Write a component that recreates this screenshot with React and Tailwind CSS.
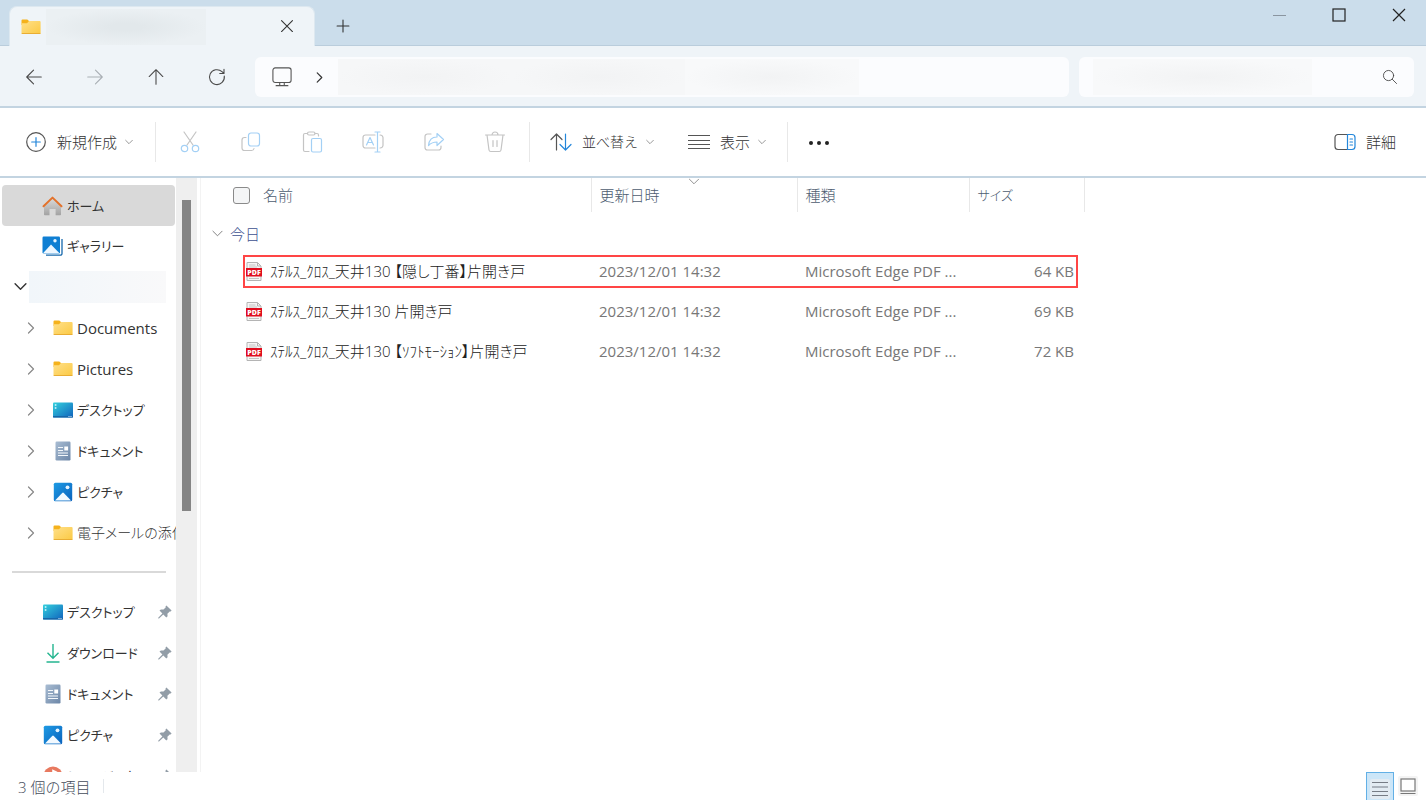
import React from "react";

/* ---------- icons ---------- */

function Folder({ className }) {
  return (
    <svg className={className} viewBox="0 0 20 16" fill="none" aria-hidden="true">
      <defs>
        <linearGradient id="folderFront" x1="0" y1="0" x2="1" y2="1">
          <stop offset="0" stopColor="#ffe08a" />
          <stop offset="1" stopColor="#fbc943" />
        </linearGradient>
      </defs>
      <path d="M0.5 1.500a1 1 0 0 1 1-1h4.800l1.700 1.600h0.500V6h-8z" fill="#f5b21c" />
      <path d="M0.5 4.200H6l2-2.200h10.600a1 1 0 0 1 1 1V14a1 1 0 0 1-1 1H1.500a1 1 0 0 1-1-1z" fill="url(#folderFront)" />
      <path d="M0.5 14a1 1 0 0 0 1 1h17.100a1 1 0 0 0 1-1z" fill="#e9ad33" />
    </svg>
  );
}

function HomeIcon({ className }) {
  return (
    <svg className={className} viewBox="0 0 20 20" fill="none" aria-hidden="true">
      <defs>
        <linearGradient id="homeWall" x1="0" y1="0" x2="0" y2="1">
          <stop offset="0" stopColor="#dcdcdc" />
          <stop offset="1" stopColor="#a2a2a2" />
        </linearGradient>
      </defs>
      <path d="M1.500 9.500L10 1.800l8.500 7.700V18.500a0.800 0.800 0 0 1-.8.8h-4.600v-6.300H7v6.300H2.300a0.800 0.800 0 0 1-.8-.8z" fill="url(#homeWall)" />
      <path d="M1 10.300L10 1.600l9 8.700" stroke="#e3722b" strokeWidth="2" strokeLinecap="round" strokeLinejoin="round" />
    </svg>
  );
}

function GalleryIcon({ className }) {
  return (
    <svg className={className} viewBox="0 0 21 20" fill="none" aria-hidden="true">
      <path d="M20 3v14.500a1.700 1.700 0 0 1-1.700 1.700H4" stroke="#1668ac" strokeWidth="1.300" />
      <rect x="0.500" y="0.500" width="17.500" height="17" rx="1.200" fill="#0f7fd3" />
      <path d="M1 17.300L9 8.500l8.500 8.800z" fill="#eef7ff" />
      <circle cx="13" cy="4.800" r="1.700" fill="#e7f4ff" />
    </svg>
  );
}

function PictureIcon({ className }) {
  return (
    <svg className={className} viewBox="0 0 20 20" fill="none" aria-hidden="true">
      <defs>
        <linearGradient id="pictureSky" x1="0" y1="0" x2="1" y2="1">
          <stop offset="0" stopColor="#1e9be4" />
          <stop offset="1" stopColor="#0a62bd" />
        </linearGradient>
      </defs>
      <rect x="0.800" y="0.800" width="18.400" height="18.400" rx="1.500" fill="url(#pictureSky)" />
      <path d="M2 18.600l7.200-7.700a1.100 1.100 0 0 1 1.600 0l7.200 7.700z" fill="#f2f9ff" />
      <circle cx="14.500" cy="5.300" r="1.900" fill="#e3f3ff" />
    </svg>
  );
}

function DesktopIcon({ className }) {
  return (
    <svg className={className} viewBox="0 0 20 16" fill="none" aria-hidden="true">
      <defs>
        <linearGradient id="desktopFill" x1="0" y1="0" x2="1" y2="1">
          <stop offset="0" stopColor="#34d0dd" />
          <stop offset="1" stopColor="#1063bd" />
        </linearGradient>
      </defs>
      <rect x="0" y="0.500" width="20" height="15" rx="1" fill="url(#desktopFill)" />
      <rect x="0" y="14" width="20" height="1.500" fill="#1766a8" />
      <path d="M1.800 2.200h1.600v1.600H1.800zM1.800 5.200h1.600v1.600H1.800z" fill="#d8fbff" />
      <path d="M15.500 14.500h1M17.500 14.500h1" stroke="#d8ecff" />
    </svg>
  );
}

function DocumentIcon({ className }) {
  return (
    <svg className={className} viewBox="0 0 16 20" fill="none" aria-hidden="true">
      <defs>
        <linearGradient id="documentFill" x1="0" y1="0" x2="1" y2="1">
          <stop offset="0" stopColor="#a9bdd3" />
          <stop offset="1" stopColor="#6c86a7" />
        </linearGradient>
      </defs>
      <rect x="0.500" y="0.500" width="15" height="19" rx="1.200" fill="url(#documentFill)" />
      <path d="M3 6.500h5M3 9.500h5M3 12h10M3 14.500h10" stroke="#f3f7fb" strokeWidth="1.200" />
      <rect x="9.300" y="5.500" width="3.800" height="4" fill="#ffffff" />
    </svg>
  );
}

function DownloadIcon({ className }) {
  return (
    <svg className={className} viewBox="0 0 20 20" fill="none" aria-hidden="true">
      <path d="M10 1v14M4.500 9.800L10 15.300l5.500-5.500" stroke="#23b58f" strokeWidth="1.400" />
      <path d="M3.500 19h13" stroke="#23b58f" strokeWidth="1.500" />
    </svg>
  );
}

function MusicIcon({ className }) {
  return (
    <svg className={className} viewBox="0 0 20 20" fill="none" aria-hidden="true">
      <circle cx="10" cy="10" r="9.500" fill="#e8795f" />
      <path d="M10 14V4.500l4 2" stroke="#ffffff" strokeWidth="1.600" />
      <circle cx="8.500" cy="14" r="2" fill="#ffffff" />
    </svg>
  );
}

function PinIcon() {
  return (
    <svg className="size-[14px] shrink-0" viewBox="0 0 14 14" aria-hidden="true">
      <path d="M8.400 0.400l5.200 5.200-1 1-.9-.2-2.300 2.300.2 2.600-1.300 1.300-3-3L1 13.600l-.7-.2-.1-.6 4.200-4.200-2.900-3 1.400-1.200 2.600.2 2.300-2.300-.3-.9z" fill="#929da7" />
    </svg>
  );
}

function PdfIcon() {
  return (
    <svg className="h-[19px] w-4 shrink-0" viewBox="0 0 16 19" fill="none" aria-hidden="true">
      <path d="M1 0.500h10.500l3.500 3.500v14.500H1z" fill="#f6f6f6" stroke="#b4b4b4" />
      <path d="M11.500 0.500V4H15" stroke="#b4b4b4" />
      <path d="M3 3h6.500M3 5h8M3 16.500h10" stroke="#c4c4c4" />
      <rect x="0" y="6" width="16" height="8.500" fill="#e00d1e" />
      <text x="8" y="13" textAnchor="middle" fontSize="7" fontWeight="800" fontFamily="Open Sans, sans-serif" fill="#ffffff">PDF</text>
    </svg>
  );
}

function Chevron({ className, d }) {
  return (
    <svg className={className} viewBox="0 0 12 12" fill="none" stroke="currentColor" aria-hidden="true">
      <path d={d} strokeLinecap="round" strokeLinejoin="round" />
    </svg>
  );
}
const DOWN = "M1 3.500L6 8.500l5-5";
const RIGHT = "M3.500 1L8.500 6l-5 5";

function Line({ children, className = "size-[22px]" }) {
  return (
    <svg className={className} viewBox="0 0 22 22" fill="none" stroke="currentColor" strokeWidth="1.200" strokeLinecap="round" strokeLinejoin="round" aria-hidden="true">
      {children}
    </svg>
  );
}

/* ---------- window frame ---------- */

function TitleBar() {
  return (
    <header className="flex h-[46px] shrink-0 border-b border-[#bacddc] bg-[#cbddeb]">
      <div className="mt-[6px] -mb-px ml-[9px] flex h-10 w-[306px] items-center rounded-t-lg border border-b-0 border-[#dde8f0] bg-[#eff4f8] pl-[11px] pr-[17px]">
        <Folder className="h-4 w-5" />
        <div className="ml-[5px] h-9 w-[160px] bg-[radial-gradient(closest-side,#e2e8eb_20%,#ebf0f3)]" />
        <button aria-label="タブを閉じる" className="ml-auto flex size-5 items-center justify-center text-[#333]">
          <Line className="size-5"><path d="M5 4l12 12M17 4L5 16" /></Line>
        </button>
      </div>
      <button aria-label="新しいタブ" className="ml-[18px] mt-[6px] flex h-10 w-5 items-center justify-center text-[#333]">
        <Line className="size-5"><path d="M11 4.500v13M4.500 11h13" /></Line>
      </button>
      <div className="ml-auto flex gap-[6px]">
        <button aria-label="最小化" className="flex h-[30px] w-[54px] items-center justify-center">
          <svg className="size-[14px]" viewBox="0 0 14 14" stroke="#8a95a0"><path d="M1 7.500h13" /></svg>
        </button>
        <button aria-label="最大化" className="flex h-[30px] w-[54px] items-center justify-center">
          <svg className="size-[14px]" viewBox="0 0 14 14" fill="none" stroke="#222" strokeWidth="1.200"><rect x="1" y="1" width="12" height="12" /></svg>
        </button>
        <button aria-label="閉じる" className="flex h-[30px] w-[54px] items-center justify-center">
          <svg className="size-[14px]" viewBox="0 0 14 14" stroke="#222" strokeWidth="1.200"><path d="M1 1l12 12M13 1L1 13" /></svg>
        </button>
      </div>
    </header>
  );
}

function NavButton({ label, muted, children }) {
  return (
    <button aria-label={label} className={muted ? "flex size-10 items-center justify-center text-[#a9afb4]" : "flex size-10 items-center justify-center text-[#4a4a4a]"}>
      <Line className="size-5">{children}</Line>
    </button>
  );
}

function NavBar() {
  return (
    <div className="flex h-[62px] shrink-0 items-center border-b-2 border-[#c3d4e1] bg-[#eff4f8] pl-[14px] pr-3 pt-[2px]">
      <div className="mr-[18px] flex gap-[21px]">
        <NavButton label="戻る"><path d="M3 11h16M10.500 3.500L3 11l7.500 7.500" /></NavButton>
        <NavButton label="進む" muted><path d="M3 11h16M11.500 3.500L19 11l-7.500 7.500" /></NavButton>
        <NavButton label="上へ"><path d="M11 3v16M3.500 10.500L11 3l7.500 7.500" /></NavButton>
        <NavButton label="更新"><path d="M19 10A8.200 8.200 0 1 1 16.500 5.200L18.500 7M18.700 2.500V7.200H14" /></NavButton>
      </div>
      <nav aria-label="アドレス バー" className="mr-[10px] flex h-10 flex-1 items-center rounded-md bg-[#fbfcfe] pl-[17px]">
        <Line className="size-5 text-[#555]">
          <rect x="1" y="1" width="20" height="16" rx="2.500" />
          <path d="M8.500 17v3M13.500 17v3M4.500 20.500h13" />
        </Line>
        <Chevron className="ml-[22px] size-[11px] text-[#333] stroke-[1.300]" d={RIGHT} />
        <div className="ml-[13px] flex h-9 w-[521px] bg-[#f6f7f8]">
          <div className="flex-1 bg-[radial-gradient(closest-side,#f2f3f4,#f6f7f8)]" />
          <div className="flex-1 bg-[radial-gradient(closest-side,#f2f3f4,#f6f7f8)]" />
          <div className="flex-1 bg-[radial-gradient(closest-side,#f2f3f4,#f8f9fa)]" />
        </div>
      </nav>
      <label className="flex h-10 w-[335px] items-center rounded-md bg-[#fbfcfe] pl-[14px] pr-4">
        <input type="search" aria-label="検索" className="h-9 w-[219px] bg-[radial-gradient(closest-side,#f2f3f4,#f8f9fa)] outline-none" />
        <Line className="ml-auto size-4 text-[#444]">
          <circle cx="9" cy="9" r="7" />
          <path d="M14.200 14.200L20 20" />
        </Line>
      </label>
    </div>
  );
}

/* ---------- command bar ---------- */

function Separator() {
  return <div className="h-10 w-px bg-[#e8e8e8]" />;
}

function GhostButton({ label, children }) {
  return (
    <button disabled aria-label={label} className="flex h-10 w-[22px] items-center justify-center text-[#c4c4c4]">
      <Line>{children}</Line>
    </button>
  );
}

function MenuButton({ icon, children }) {
  return (
    <button className="flex h-10 items-center gap-[10px] text-[#333]">
      {icon}
      <span className="flex items-center gap-2">
        {children}
        <Chevron className="size-2 stroke-[1.300] text-[#888]" d={DOWN} />
      </span>
    </button>
  );
}

const PALE = "#a3d0f5";

function CommandBar() {
  return (
    <div className="flex h-[70px] shrink-0 items-center border-b-2 border-[#c3d4e1] bg-white pl-[25px] pr-[30px] font-light text-[#333]">
      <div className="w-[130px]">
        <MenuButton
          icon={
            <Line>
              <circle cx="11" cy="11" r="9.300" stroke="#555" />
              <path d="M11 6.700v8.600M6.700 11h8.600" stroke="#2386da" />
            </Line>
          }
        >
          新規作成
        </MenuButton>
      </div>
      <Separator />
      <div className="ml-[23px] mr-[23px] flex gap-[39px]">
        <GhostButton label="切り取り">
          <path d="M5 1l9 13M17 1L8 14" />
          <g stroke={PALE}><circle cx="5.500" cy="17.500" r="3.200" /><circle cx="16.500" cy="17.500" r="3.200" /></g>
        </GhostButton>
        <GhostButton label="コピー">
          <path d="M6 6.500H4.500A2.500 2.500 0 0 0 2 9v8a2.500 2.500 0 0 0 2.500 2.500h7A2.500 2.500 0 0 0 14 17.500" />
          <rect x="8.500" y="2" width="11" height="13" rx="2.500" stroke={PALE} />
        </GhostButton>
        <GhostButton label="貼り付け">
          <path d="M8 20.500H4A1.500 1.500 0 0 1 2.500 19V4A1.500 1.500 0 0 1 4 2.500h2.500M14 2.500h2A1.500 1.500 0 0 1 17.500 4v1" />
          <rect x="6.500" y="1" width="7.500" height="3" rx="1.500" />
          <rect x="10.500" y="7.500" width="10" height="13.500" rx="1.500" stroke={PALE} />
        </GhostButton>
        <GhostButton label="名前の変更">
          <path d="M13 4H3.500A2.500 2.500 0 0 0 1 6.500v8A2.500 2.500 0 0 0 3.500 17H13M18 4a3 3 0 0 1 3 2.500v8A3 3 0 0 1 18 17" />
          <path d="M4.500 14L8 6.500l3.500 7.500M5.700 11.500h4.600M13 1h5M15.500 1v20M13 21h5" stroke={PALE} />
        </GhostButton>
        <GhostButton label="共有">
          <path d="M8 3H4.500A2.500 2.500 0 0 0 2 5.500v11A2.500 2.500 0 0 0 4.500 19h11a2.500 2.500 0 0 0 2.500-2.500V15" />
          <path d="M14 2.500l6.500 6-6.500 6v-3.500c-4 0-6 1-8.500 3.500C6 9 9 6 14 6z" stroke={PALE} />
        </GhostButton>
        <GhostButton label="削除">
          <path d="M1.500 4h19M3 4l2 15a1.800 1.800 0 0 0 1.800 1.500h8.400A1.800 1.800 0 0 0 17 19l2-15M8 4a3 3 0 0 1 6 0M9 9.500v6M13 9.500v6" />
        </GhostButton>
      </div>
      <Separator />
      <div className="ml-5 w-[118px] text-sm">
        <MenuButton
          icon={
            <Line>
              <path d="M6.500 19V3M1 8.500L6.500 3 12 8.500" stroke="#555" />
              <path d="M15.500 3v16M10 13.500l5.500 5.500 5.500-5.500" stroke="#2386da" />
            </Line>
          }
        >
          並べ替え
        </MenuButton>
      </div>
      <div className="ml-5 w-[99px]">
        <MenuButton
          icon={<Line><path d="M0.500 4.500h21M0.500 9.500h21M0.500 13.500h21M0.500 17.500h21" stroke="#555" /></Line>}
        >
          表示
        </MenuButton>
      </div>
      <Separator />
      <button aria-label="その他" className="ml-5 flex h-10 items-center text-[#222]">
        <svg className="size-[22px]" viewBox="0 0 22 22" fill="currentColor"><circle cx="3" cy="12" r="2" /><circle cx="11" cy="12" r="2" /><circle cx="19" cy="12" r="2" /></svg>
      </button>
      <button className="ml-auto flex h-10 items-center gap-[10px] text-[#333]">
        <Line>
          <path d="M13 3.500H4A3 3 0 0 0 1 6.500v9a3 3 0 0 0 3 3h9" stroke="#555" />
          <path d="M13.500 3.500H18a3 3 0 0 1 3 3v9a3 3 0 0 1-3 3h-4.500zM16 8h2.500M16 11h2.500M16 14h2.500" stroke="#2386da" />
        </Line>
        詳細
      </button>
    </div>
  );
}

/* ---------- sidebar ---------- */

const TREE = [
  { name: "Documents", Icon: Folder, size: "h-4 w-5", text: "text-[15px]" },
  { name: "Pictures", Icon: Folder, size: "h-4 w-5", text: "text-[15px]" },
  { name: "デスクトップ", Icon: DesktopIcon, size: "h-4 w-5", text: "text-[13px]" },
  { name: "ドキュメント", Icon: DocumentIcon, size: "h-5 w-4", text: "text-[13px]" },
  { name: "ピクチャ", Icon: PictureIcon, size: "size-5", text: "text-[13px]" },
  { name: "電子メールの添付", Icon: Folder, size: "h-4 w-5", text: "text-sm font-light" },
];

const PINNED = [
  { name: "デスクトップ", Icon: DesktopIcon, size: "h-4 w-5" },
  { name: "ダウンロード", Icon: DownloadIcon, size: "size-5" },
  { name: "ドキュメント", Icon: DocumentIcon, size: "h-5 w-4" },
  { name: "ピクチャ", Icon: PictureIcon, size: "size-5" },
  { name: "ミュージック", Icon: MusicIcon, size: "size-5" },
];

function Sidebar() {
  return (
    <div className="flex w-[201px] shrink-0 border-r border-[#f3f3f3]">
      <nav aria-label="ナビゲーション ウィンドウ" className="w-[176px] overflow-hidden whitespace-nowrap pt-[7px] text-[13px] text-[#333] [font-feature-settings:'palt']">
        <a href="#home" className="ml-[2px] mr-px flex h-[41px] items-center gap-1 rounded-sm bg-[#d9d9d9] pl-10">
          <HomeIcon className="h-5 w-[21px] shrink-0" />ホーム
        </a>
        <a href="#gallery" className="flex h-10 items-center gap-1 pl-[42px]">
          <GalleryIcon className="h-5 w-[21px] shrink-0" />ギャラリー
        </a>
        <div className="flex h-[41px] items-center pl-[14px]">
          <Chevron className="size-[13px] stroke-[1.300] text-[#333]" d={DOWN} />
          <div className="ml-[2px] h-8 w-[137px] bg-linear-to-r from-[#f1f6fa] to-[#f9f9fa]" />
        </div>
        <ul>
          {TREE.map(({ name, Icon, size, text }) => (
            <li key={name} className="flex h-[41px] items-center pl-[25px]">
              <Chevron className="size-3 shrink-0 stroke-[1.200] text-[#888]" d={RIGHT} />
              <a href="#folder" className="ml-[15px] flex items-center gap-1">
                <span className="flex w-[21px] shrink-0 justify-center"><Icon className={size} /></span>
                <span className={text}>{name}</span>
              </a>
            </li>
          ))}
        </ul>
        <hr className="mb-[18px] ml-3 mr-[10px] mt-[18px] border-t-2 border-[#d9d9d9]" />
        <ul>
          {PINNED.map(({ name, Icon, size }) => (
            <li key={name} className="flex h-[41px] items-center justify-between pl-[42px] pr-1">
              <a href="#pinned" className="flex items-center gap-1">
                <span className="flex w-[21px] shrink-0 justify-center"><Icon className={size} /></span>
                {name}
              </a>
              <PinIcon />
            </li>
          ))}
        </ul>
      </nav>
      <div className="w-[21px] bg-[#efefef] pl-[6px] pt-[22px]">
        <div className="h-[311px] w-[9px] bg-[#858585]" />
      </div>
    </div>
  );
}

/* ---------- file list ---------- */

const FILES = [
  { name: "ｽﾃﾙｽ_ｸﾛｽ_天井130 【隠し丁番】片開き戸", size: "64 KB", marked: true },
  { name: "ｽﾃﾙｽ_ｸﾛｽ_天井130 片開き戸", size: "69 KB" },
  { name: "ｽﾃﾙｽ_ｸﾛｽ_天井130 【ｿﾌﾄﾓｰｼｮﾝ】片開き戸", size: "72 KB" },
];

function FileList() {
  return (
    <main className="min-w-0 flex-1 overflow-hidden">
      <table className="w-[883px] table-fixed border-collapse text-left">
        <colgroup>
          <col className="w-[390px]" />
          <col className="w-[206px]" />
          <col className="w-[172px]" />
          <col className="w-[115px]" />
        </colgroup>
        <thead className="font-light text-[#4d5c70]">
          <tr className="h-[34px]">
            <th className="border-r border-[#e8e8e8] p-0 pl-8 font-light">
              <span className="flex items-center gap-[13px]">
                <input type="checkbox" aria-label="すべて選択" className="size-[17px] appearance-none rounded-[3px] border border-[#8a8a8a] bg-[#f4f5f6]" />
                名前
              </span>
            </th>
            <th className="relative border-r border-[#e8e8e8] p-0 pl-2 font-light">
              更新日時
              <Chevron className="absolute left-1/2 top-[-2px] size-[11px] -translate-x-1/2 text-[#888]" d={DOWN} />
            </th>
            <th className="border-r border-[#e8e8e8] p-0 pl-2 font-light">種類</th>
            <th className="border-r border-[#e8e8e8] p-0 pl-2 text-[13px] font-light [font-feature-settings:'palt']">サイズ</th>
          </tr>
        </thead>
        <tbody className="text-[#777]">
          <tr className="h-[39px]">
            <th colSpan={4} scope="rowgroup" className="p-0 pl-[11px] pt-1 font-light text-[#3d5190]">
              <button className="flex items-center gap-[7px]">
                <Chevron className="size-[11px] text-[#777]" d={DOWN} />
                今日
              </button>
            </th>
          </tr>
          {FILES.map((file) => (
            <tr key={file.name} className="relative h-10">
              <td className="p-0 pl-[45px] text-[#222]">
                <span className="flex items-center gap-2 whitespace-nowrap font-light [font-feature-settings:'palt']">
                  <PdfIcon />
                  {file.name}
                </span>
                {file.marked && <span className="pointer-events-none absolute bottom-[3px] left-[42px] right-[6px] top-1 border-2 border-[#ff4545]" />}
              </td>
              <td className="p-0 pl-2">2023/12/01 14:32</td>
              <td className="p-0 pl-2">Microsoft Edge PDF ...</td>
              <td className="p-0 pr-[10px] text-right">{file.size}</td>
            </tr>
          ))}
        </tbody>
      </table>
    </main>
  );
}

function StatusBar() {
  return (
    <footer className="flex h-7 shrink-0 items-center bg-white pl-[18px] text-[#444c5a]">
      <span className="mt-[2px] font-light">3 個の項目</span>
      <span className="ml-[13px] h-[14px] w-px bg-[#e4e8ec]" />
      <button aria-label="詳細表示" className="ml-auto flex h-7 w-7 items-center justify-center border border-b-0 border-[#62b0e6] bg-[#cce6f8]">
        <svg className="mt-1 size-5" viewBox="0 0 20 20">
          <rect width="20" height="20" rx="2" fill="#e3ebf2" />
          <path d="M2 3.500h16M2 8h16M2 12.500h16M2 16.500h16" stroke="#777c85" strokeWidth="1.200" />
        </svg>
      </button>
      <button aria-label="大アイコン表示" className="ml-1 mr-2 flex h-7 w-5 items-center justify-center">
        <svg className="size-5" viewBox="0 0 20 20" fill="none">
          <rect width="20" height="20" rx="2" fill="#f4f4f4" />
          <rect x="3" y="3" width="14" height="12" fill="#ffffff" stroke="#777" strokeWidth="1.200" />
          <path d="M2.500 17.500h15" stroke="#777" />
        </svg>
      </button>
    </footer>
  );
}

export default function App() {
  return (
    <div className="flex h-screen flex-col overflow-hidden bg-white font-['Open_Sans','Noto_Sans_CJK_JP',sans-serif] text-[15px] leading-5">
      <TitleBar />
      <NavBar />
      <CommandBar />
      <div className="flex min-h-0 flex-1">
        <Sidebar />
        <FileList />
      </div>
      <StatusBar />
    </div>
  );
}
